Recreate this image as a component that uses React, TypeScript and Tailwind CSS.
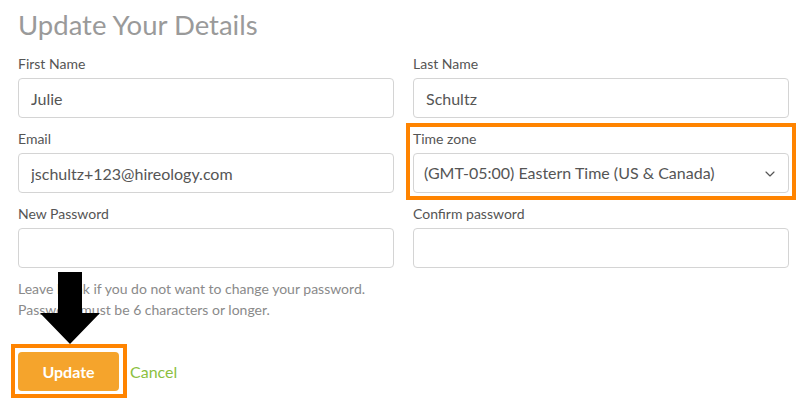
import { ChevronDown } from 'lucide-react';

function Field({ label, value, type = 'text' }: { label: string; value?: string; type?: string }) {
  return (
    <div>
      <label className="mb-1 block text-[14px] leading-[20px] text-[#555]">{label}</label>
      <input
        type={type}
        defaultValue={value}
        className="h-10 w-full rounded-[4px] border border-[#d4d4d4] bg-white px-3 text-[16px] text-[#555] outline-none"
      />
    </div>
  );
}

export default function App() {
  return (
    <div className="relative h-[408px] w-[806px] bg-white px-[18px] pt-[8px] font-['Lato',sans-serif]">
      <h1 className="text-[27.5px] leading-[34px] text-[#9a9a9a]">Update Your Details</h1>

      <div className="mt-3 grid w-[771px] grid-cols-2 gap-x-[19px] gap-y-[11px]">
        <Field label="First Name" value="Julie" />
        <Field label="Last Name" value="Schultz" />
        <Field label="Email" value="jschultz+123@hireology.com" />
        <div className="relative">
          <label className="mb-1 block text-[14px] leading-[20px] text-[#555]">Time zone</label>
          <div className="relative">
            <select
              defaultValue="est"
              className="h-10 w-full appearance-none rounded-[4px] border border-[#d4d4d4] bg-white pl-[10px] pr-3 text-[16px] text-[#555] outline-none"
            >
              <option value="est">(GMT-05:00) Eastern Time (US &amp; Canada)</option>
            </select>
            <ChevronDown className="pointer-events-none absolute right-[11px] top-[13px] h-4 w-4 text-[#555]" strokeWidth={1.75} />
          </div>
          <div className="pointer-events-none absolute -bottom-[7px] -left-[7px] -right-[7px] -top-[6px] border-4 border-[#ff8400]" />
        </div>
        <Field label="New Password" type="password" />
        <Field label="Confirm password" type="password" />
      </div>

      <p className="mt-[10px] text-[14px] leading-[21px] text-[#8a8a8a]">
        Leave blank if you do not want to change your password.
        <br />
        Password must be 6 characters or longer.
      </p>

      <div className="mt-[32px] flex items-center gap-[11px]">
        <div className="relative">
          <button className="h-[39px] w-[101px] rounded-[4px] bg-[#f5a42c] text-[16px] font-bold text-white">Update</button>
          <div className="pointer-events-none absolute -bottom-[7px] -left-[7px] -right-[8px] -top-[8px] border-4 border-[#ff8400]" />
        </div>
        <button className="text-[16px] text-[#8cbf3f]">Cancel</button>
      </div>

      <svg className="pointer-events-none absolute left-0 top-0" width="806" height="408" viewBox="0 0 806 408">
        <polygon points="58,272 82,272 82,313 100,313 70,344 40,313 58,313" fill="#000" />
      </svg>
    </div>
  );
}
